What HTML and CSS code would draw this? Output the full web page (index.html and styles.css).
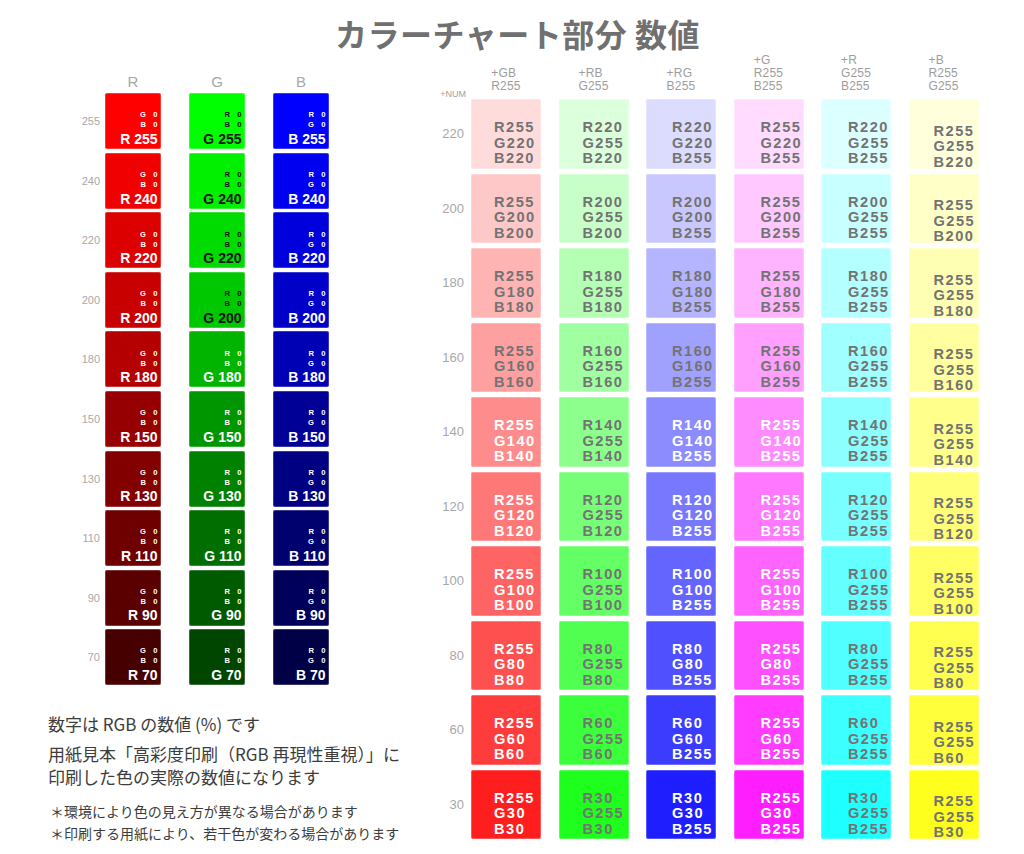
FILE: index.html
```html
<!DOCTYPE html>
<html lang="ja">
<head>
<meta charset="utf-8">
<title>カラーチャート部分 数値</title>
<link rel="stylesheet" href="styles.css">
</head>
<body>
<div class="page">
  <h1 class="title">カラーチャート部分 数値</h1>
  <div class="main">
    <section class="left">
      <div class="lhead"><span class="lab"></span><span class="hcell">R</span><span class="hcell">G</span><span class="hcell">B</span></div>
      <div class="lgrid">
        <div class="lrow"><span class="lab">255</span>
          <div class="ltile" style="background:rgb(255,0,0)"><span class="sub">G 0<br>B 0</span><span class="big">R 255</span></div>
          <div class="ltile dk" style="background:rgb(0,255,0)"><span class="sub">R 0<br>B 0</span><span class="big">G 255</span></div>
          <div class="ltile" style="background:rgb(0,0,255)"><span class="sub">R 0<br>G 0</span><span class="big">B 255</span></div>
        </div>
        <div class="lrow"><span class="lab">240</span>
          <div class="ltile" style="background:rgb(240,0,0)"><span class="sub">G 0<br>B 0</span><span class="big">R 240</span></div>
          <div class="ltile dk" style="background:rgb(0,240,0)"><span class="sub">R 0<br>B 0</span><span class="big">G 240</span></div>
          <div class="ltile" style="background:rgb(0,0,240)"><span class="sub">R 0<br>G 0</span><span class="big">B 240</span></div>
        </div>
        <div class="lrow"><span class="lab">220</span>
          <div class="ltile" style="background:rgb(220,0,0)"><span class="sub">G 0<br>B 0</span><span class="big">R 220</span></div>
          <div class="ltile dk" style="background:rgb(0,220,0)"><span class="sub">R 0<br>B 0</span><span class="big">G 220</span></div>
          <div class="ltile" style="background:rgb(0,0,220)"><span class="sub">R 0<br>G 0</span><span class="big">B 220</span></div>
        </div>
        <div class="lrow"><span class="lab">200</span>
          <div class="ltile" style="background:rgb(200,0,0)"><span class="sub">G 0<br>B 0</span><span class="big">R 200</span></div>
          <div class="ltile dk" style="background:rgb(0,200,0)"><span class="sub">R 0<br>B 0</span><span class="big">G 200</span></div>
          <div class="ltile" style="background:rgb(0,0,200)"><span class="sub">R 0<br>G 0</span><span class="big">B 200</span></div>
        </div>
        <div class="lrow"><span class="lab">180</span>
          <div class="ltile" style="background:rgb(180,0,0)"><span class="sub">G 0<br>B 0</span><span class="big">R 180</span></div>
          <div class="ltile" style="background:rgb(0,180,0)"><span class="sub">R 0<br>B 0</span><span class="big">G 180</span></div>
          <div class="ltile" style="background:rgb(0,0,180)"><span class="sub">R 0<br>G 0</span><span class="big">B 180</span></div>
        </div>
        <div class="lrow"><span class="lab">150</span>
          <div class="ltile" style="background:rgb(150,0,0)"><span class="sub">G 0<br>B 0</span><span class="big">R 150</span></div>
          <div class="ltile" style="background:rgb(0,150,0)"><span class="sub">R 0<br>B 0</span><span class="big">G 150</span></div>
          <div class="ltile" style="background:rgb(0,0,150)"><span class="sub">R 0<br>G 0</span><span class="big">B 150</span></div>
        </div>
        <div class="lrow"><span class="lab">130</span>
          <div class="ltile" style="background:rgb(130,0,0)"><span class="sub">G 0<br>B 0</span><span class="big">R 130</span></div>
          <div class="ltile" style="background:rgb(0,130,0)"><span class="sub">R 0<br>B 0</span><span class="big">G 130</span></div>
          <div class="ltile" style="background:rgb(0,0,130)"><span class="sub">R 0<br>G 0</span><span class="big">B 130</span></div>
        </div>
        <div class="lrow"><span class="lab">110</span>
          <div class="ltile" style="background:rgb(110,0,0)"><span class="sub">G 0<br>B 0</span><span class="big">R 110</span></div>
          <div class="ltile" style="background:rgb(0,110,0)"><span class="sub">R 0<br>B 0</span><span class="big">G 110</span></div>
          <div class="ltile" style="background:rgb(0,0,110)"><span class="sub">R 0<br>G 0</span><span class="big">B 110</span></div>
        </div>
        <div class="lrow"><span class="lab">90</span>
          <div class="ltile" style="background:rgb(90,0,0)"><span class="sub">G 0<br>B 0</span><span class="big">R 90</span></div>
          <div class="ltile" style="background:rgb(0,90,0)"><span class="sub">R 0<br>B 0</span><span class="big">G 90</span></div>
          <div class="ltile" style="background:rgb(0,0,90)"><span class="sub">R 0<br>G 0</span><span class="big">B 90</span></div>
        </div>
        <div class="lrow"><span class="lab">70</span>
          <div class="ltile" style="background:rgb(70,0,0)"><span class="sub">G 0<br>B 0</span><span class="big">R 70</span></div>
          <div class="ltile" style="background:rgb(0,70,0)"><span class="sub">R 0<br>B 0</span><span class="big">G 70</span></div>
          <div class="ltile" style="background:rgb(0,0,70)"><span class="sub">R 0<br>G 0</span><span class="big">B 70</span></div>
        </div>
      </div>
      <div class="notes">
        <p class="p1">数字は RGB の数値 (%) です</p>
        <p class="p2">用紙見本「高彩度印刷（RGB 再現性重視）」に<br>印刷した色の実際の数値になります</p>
        <div class="small">
          <p>＊環境により色の見え方が異なる場合があります</p>
          <p>＊印刷する用紙により、若干色が変わる場合があります</p>
        </div>
      </div>
    </section>

    <section class="right">
      <div class="rhead">
        <span class="rlab num">+NUM</span>
        <div class="ch"><div class="chi">+GB<br>R255</div></div>
        <div class="ch"><div class="chi">+RB<br>G255</div></div>
        <div class="ch"><div class="chi">+RG<br>B255</div></div>
        <div class="ch"><div class="chi">+G<br>R255<br>B255</div></div>
        <div class="ch"><div class="chi">+R<br>G255<br>B255</div></div>
        <div class="ch"><div class="chi">+B<br>R255<br>G255</div></div>
      </div>
      <div class="rgrid">
        <div class="rrow"><span class="rlab">220</span>
          <div class="rtile c1" style="background:rgb(255,220,220)"><span class="v">R255<br>G220<br>B220</span></div>
          <div class="rtile c2" style="background:rgb(220,255,220)"><span class="v">R220<br>G255<br>B220</span></div>
          <div class="rtile c3" style="background:rgb(220,220,255)"><span class="v">R220<br>G220<br>B255</span></div>
          <div class="rtile c4" style="background:rgb(255,220,255)"><span class="v">R255<br>G220<br>B255</span></div>
          <div class="rtile c5" style="background:rgb(220,255,255)"><span class="v">R220<br>G255<br>B255</span></div>
          <div class="rtile c6" style="background:rgb(255,255,220)"><span class="v">R255<br>G255<br>B220</span></div>
        </div>
        <div class="rrow"><span class="rlab">200</span>
          <div class="rtile c1" style="background:rgb(255,200,200)"><span class="v">R255<br>G200<br>B200</span></div>
          <div class="rtile c2" style="background:rgb(200,255,200)"><span class="v">R200<br>G255<br>B200</span></div>
          <div class="rtile c3" style="background:rgb(200,200,255)"><span class="v">R200<br>G200<br>B255</span></div>
          <div class="rtile c4" style="background:rgb(255,200,255)"><span class="v">R255<br>G200<br>B255</span></div>
          <div class="rtile c5" style="background:rgb(200,255,255)"><span class="v">R200<br>G255<br>B255</span></div>
          <div class="rtile c6" style="background:rgb(255,255,200)"><span class="v">R255<br>G255<br>B200</span></div>
        </div>
        <div class="rrow"><span class="rlab">180</span>
          <div class="rtile c1" style="background:rgb(255,180,180)"><span class="v">R255<br>G180<br>B180</span></div>
          <div class="rtile c2" style="background:rgb(180,255,180)"><span class="v">R180<br>G255<br>B180</span></div>
          <div class="rtile c3" style="background:rgb(180,180,255)"><span class="v">R180<br>G180<br>B255</span></div>
          <div class="rtile c4" style="background:rgb(255,180,255)"><span class="v">R255<br>G180<br>B255</span></div>
          <div class="rtile c5" style="background:rgb(180,255,255)"><span class="v">R180<br>G255<br>B255</span></div>
          <div class="rtile c6" style="background:rgb(255,255,180)"><span class="v">R255<br>G255<br>B180</span></div>
        </div>
        <div class="rrow"><span class="rlab">160</span>
          <div class="rtile c1" style="background:rgb(255,160,160)"><span class="v">R255<br>G160<br>B160</span></div>
          <div class="rtile c2" style="background:rgb(160,255,160)"><span class="v">R160<br>G255<br>B160</span></div>
          <div class="rtile c3" style="background:rgb(160,160,255)"><span class="v">R160<br>G160<br>B255</span></div>
          <div class="rtile c4" style="background:rgb(255,160,255)"><span class="v">R255<br>G160<br>B255</span></div>
          <div class="rtile c5" style="background:rgb(160,255,255)"><span class="v">R160<br>G255<br>B255</span></div>
          <div class="rtile c6" style="background:rgb(255,255,160)"><span class="v">R255<br>G255<br>B160</span></div>
        </div>
        <div class="rrow"><span class="rlab">140</span>
          <div class="rtile c1 w" style="background:rgb(255,140,140)"><span class="v">R255<br>G140<br>B140</span></div>
          <div class="rtile c2" style="background:rgb(140,255,140)"><span class="v">R140<br>G255<br>B140</span></div>
          <div class="rtile c3 w" style="background:rgb(140,140,255)"><span class="v">R140<br>G140<br>B255</span></div>
          <div class="rtile c4 w" style="background:rgb(255,140,255)"><span class="v">R255<br>G140<br>B255</span></div>
          <div class="rtile c5" style="background:rgb(140,255,255)"><span class="v">R140<br>G255<br>B255</span></div>
          <div class="rtile c6" style="background:rgb(255,255,140)"><span class="v">R255<br>G255<br>B140</span></div>
        </div>
        <div class="rrow"><span class="rlab">120</span>
          <div class="rtile c1 w" style="background:rgb(255,120,120)"><span class="v">R255<br>G120<br>B120</span></div>
          <div class="rtile c2" style="background:rgb(120,255,120)"><span class="v">R120<br>G255<br>B120</span></div>
          <div class="rtile c3 w" style="background:rgb(120,120,255)"><span class="v">R120<br>G120<br>B255</span></div>
          <div class="rtile c4 w" style="background:rgb(255,120,255)"><span class="v">R255<br>G120<br>B255</span></div>
          <div class="rtile c5" style="background:rgb(120,255,255)"><span class="v">R120<br>G255<br>B255</span></div>
          <div class="rtile c6" style="background:rgb(255,255,120)"><span class="v">R255<br>G255<br>B120</span></div>
        </div>
        <div class="rrow"><span class="rlab">100</span>
          <div class="rtile c1 w" style="background:rgb(255,100,100)"><span class="v">R255<br>G100<br>B100</span></div>
          <div class="rtile c2" style="background:rgb(100,255,100)"><span class="v">R100<br>G255<br>B100</span></div>
          <div class="rtile c3 w" style="background:rgb(100,100,255)"><span class="v">R100<br>G100<br>B255</span></div>
          <div class="rtile c4 w" style="background:rgb(255,100,255)"><span class="v">R255<br>G100<br>B255</span></div>
          <div class="rtile c5" style="background:rgb(100,255,255)"><span class="v">R100<br>G255<br>B255</span></div>
          <div class="rtile c6" style="background:rgb(255,255,100)"><span class="v">R255<br>G255<br>B100</span></div>
        </div>
        <div class="rrow"><span class="rlab">80</span>
          <div class="rtile c1 w" style="background:rgb(255,80,80)"><span class="v">R255<br>G80<br>B80</span></div>
          <div class="rtile c2" style="background:rgb(80,255,80)"><span class="v">R80<br>G255<br>B80</span></div>
          <div class="rtile c3 w" style="background:rgb(80,80,255)"><span class="v">R80<br>G80<br>B255</span></div>
          <div class="rtile c4 w" style="background:rgb(255,80,255)"><span class="v">R255<br>G80<br>B255</span></div>
          <div class="rtile c5" style="background:rgb(80,255,255)"><span class="v">R80<br>G255<br>B255</span></div>
          <div class="rtile c6" style="background:rgb(255,255,80)"><span class="v">R255<br>G255<br>B80</span></div>
        </div>
        <div class="rrow"><span class="rlab">60</span>
          <div class="rtile c1 w" style="background:rgb(255,60,60)"><span class="v">R255<br>G60<br>B60</span></div>
          <div class="rtile c2" style="background:rgb(60,255,60)"><span class="v">R60<br>G255<br>B60</span></div>
          <div class="rtile c3 w" style="background:rgb(60,60,255)"><span class="v">R60<br>G60<br>B255</span></div>
          <div class="rtile c4 w" style="background:rgb(255,60,255)"><span class="v">R255<br>G60<br>B255</span></div>
          <div class="rtile c5" style="background:rgb(60,255,255)"><span class="v">R60<br>G255<br>B255</span></div>
          <div class="rtile c6" style="background:rgb(255,255,60)"><span class="v">R255<br>G255<br>B60</span></div>
        </div>
        <div class="rrow"><span class="rlab">30</span>
          <div class="rtile c1 w" style="background:rgb(255,30,30)"><span class="v">R255<br>G30<br>B30</span></div>
          <div class="rtile c2" style="background:rgb(30,255,30)"><span class="v">R30<br>G255<br>B30</span></div>
          <div class="rtile c3 w" style="background:rgb(30,30,255)"><span class="v">R30<br>G30<br>B255</span></div>
          <div class="rtile c4 w" style="background:rgb(255,30,255)"><span class="v">R255<br>G30<br>B255</span></div>
          <div class="rtile c5" style="background:rgb(30,255,255)"><span class="v">R30<br>G255<br>B255</span></div>
          <div class="rtile c6" style="background:rgb(255,255,30)"><span class="v">R255<br>G255<br>B30</span></div>
        </div>
      </div>
    </section>
  </div>
</div>
</body>
</html>
```

FILE: styles.css
```css
html, body {
  margin: 0;
  padding: 0;
  background: #ffffff;
}

body {
  font-family: "Noto Sans CJK JP", "Noto Sans", sans-serif;
}

.page {
  width: 1024px;
  height: 854px;
  overflow: hidden;
}

.title {
  margin: 0;
  padding: 13px 0 0 11px;
  height: 40px;
  line-height: 40px;
  text-align: center;
  font-size: 32px;
  font-weight: 700;
  color: #707070;
  letter-spacing: 0.5px;
}

.main {
  display: flex;
  padding-left: 48px;
}

/* ---------- left block ---------- */
.left {
  width: 382px;
  flex: none;
}

.lhead {
  display: flex;
  height: 20px;
  margin-top: 18.7px;
  margin-bottom: 1.6px;
  align-items: center;
}

.lab {
  width: 52px;
  margin-right: 5px;
  flex: none;
  text-align: right;
  font-family: "Liberation Sans", sans-serif;
  font-size: 11px;
  color: #a9a9a9;
}

.hcell {
  width: 56px;
  flex: none;
  text-align: center;
  font-family: "Liberation Sans", sans-serif;
  font-size: 15px;
  line-height: 20px;
  color: #a7a7a7;
}

.hcell + .hcell {
  margin-left: 28px;
}

.lgrid {
  display: flex;
  flex-direction: column;
  gap: 3.56px;
}

.lrow {
  display: flex;
  align-items: center;
  height: 56px;
}

.ltile {
  width: 56px;
  height: 56px;
  flex: none;
  box-sizing: border-box;
  border-radius: 2px;
  box-shadow: inset 0 0 0 1px rgba(255, 255, 255, 0.22);
  display: flex;
  flex-direction: column;
  justify-content: flex-end;
  align-items: flex-end;
  padding: 0 3.5px 2.3px 0;
  color: #ffffff;
  font-family: "Liberation Sans", "Open Sans", sans-serif;
  font-weight: 700;
}

.ltile + .ltile {
  margin-left: 28px;
}

.ltile.dk {
  color: #151515;
}

.sub {
  font-size: 7.6px;
  line-height: 10px;
  letter-spacing: 2.6px;
  margin-right: -2.6px;
  margin-bottom: 0.5px;
  text-align: right;
  white-space: pre;
}

.big {
  font-size: 14px;
  line-height: 16px;
  white-space: pre;
}

.notes {
  margin-top: 26.5px;
  color: #3c3c3c;
}

.notes p {
  margin: 0;
  white-space: nowrap;
}

.notes .p1 {
  font-size: 17px;
  line-height: 23px;
  margin-bottom: 7px;
}

.notes .p2 {
  font-size: 17px;
  line-height: 23px;
}

.small {
  margin-top: 12px;
  padding-left: 2px;
  font-size: 14px;
  line-height: 22.6px;
}

/* ---------- right block ---------- */
.right {
  display: flex;
  flex-direction: column;
  flex: none;
}

.rhead {
  display: flex;
  align-items: flex-end;
  height: 46px;
}

.rlab {
  width: 34px;
  margin-right: 7px;
  flex: none;
  text-align: right;
  font-family: "Liberation Sans", sans-serif;
  font-size: 13px;
  color: #a8a8a8;
}

.rlab.num {
  width: 36px;
  margin-right: 5px;
  font-size: 9px;
  line-height: 10px;
  color: #a0a0a0;
}

.ch {
  width: 70px;
  flex: none;
  display: flex;
  justify-content: center;
  padding-bottom: 6.5px;
}

.ch + .ch {
  margin-left: 17.5px;
}

.chi {
  font-family: "Liberation Sans", sans-serif;
  font-size: 12px;
  line-height: 13px;
  color: #9d9d9d;
  text-align: left;
  letter-spacing: 0.2px;
}

.rgrid {
  display: flex;
  flex-direction: column;
  gap: 5px;
}

.rrow {
  display: flex;
  align-items: center;
  height: 69.5px;
}

.rtile {
  width: 70px;
  height: 69.5px;
  flex: none;
  box-sizing: border-box;
  border-radius: 2px;
  box-shadow: inset 0 0 0 1px rgba(255, 255, 255, 0.25);
  display: flex;
  flex-direction: column;
  justify-content: flex-end;
  padding: 0 0 1.6px 25px;
  font-family: "Liberation Sans", "Noto Sans", sans-serif;
  font-weight: 700;
  font-size: 14.6px;
  line-height: 15.5px;
  letter-spacing: 1.5px;
  color: #737373;
}

.rtile + .rtile {
  margin-left: 17.5px;
}

.rtile.w {
  color: #ffffff;
}

.v {
  display: block;
  white-space: nowrap;
}

.rtile.c1 { padding-left: 23px; }
.rtile.c2 { padding-left: 24px; }
.rtile.c3 { padding-left: 26px; }
.rtile.c4 { padding-left: 27px; }
.rtile.c5 { padding-left: 27px; }
.rtile.c6 { padding-left: 25px; padding-bottom: 0; }
.rtile.c6 .v { margin-bottom: -1.5px; }
```
